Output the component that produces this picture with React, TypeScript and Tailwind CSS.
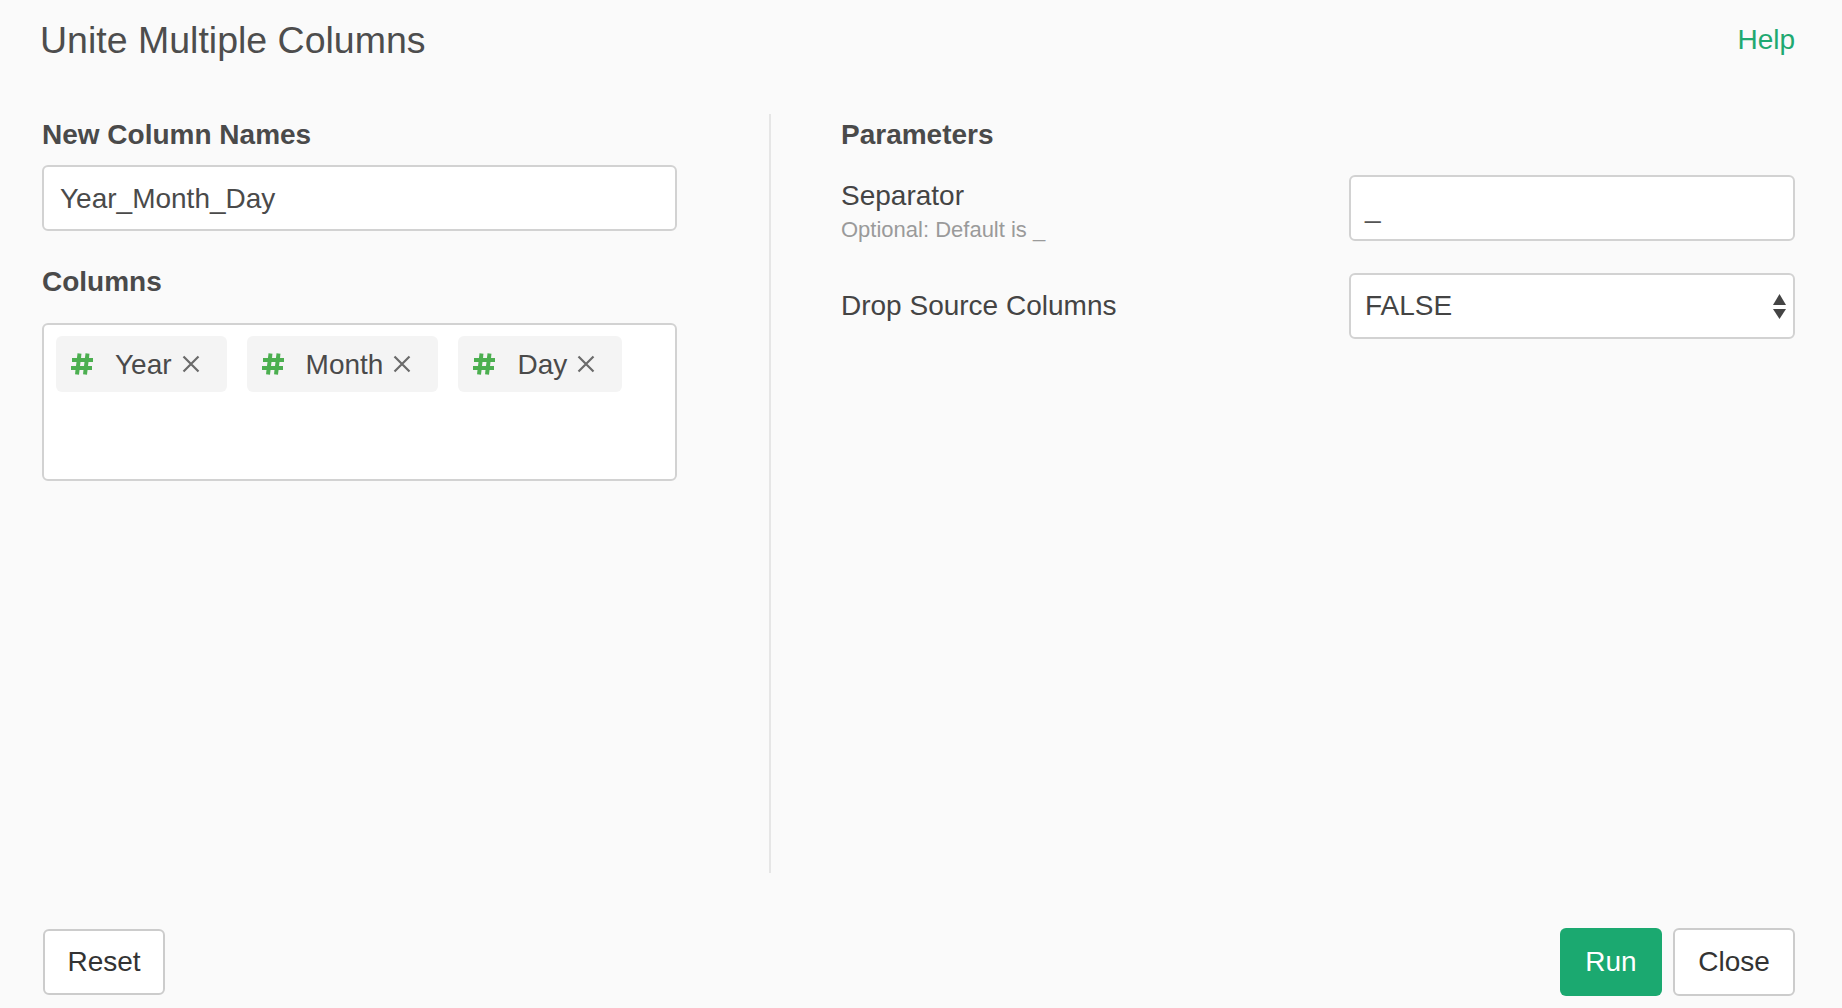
// ** Unite Multiple Columns dialog

const Hashtag = () => (
    <svg width="24" height="22" viewBox="0 0 24 22" className="shrink-0">
        <g stroke="#4caf50" strokeWidth="4" strokeLinecap="butt" fill="none">
            <path d="M9.5 0.5 7 21.5"/>
            <path d="M17.5 0.5 15 21.5"/>
            <path d="M2 7h21"/>
            <path d="M1 15h21"/>
        </g>
    </svg>
);

const Cross = () => (
    <svg width="18" height="18" viewBox="0 0 18 18" className="shrink-0">
        <path d="M1.5 1.5l15 15M16.5 1.5l-15 15" stroke="#6b6b6b" strokeWidth="2.2" fill="none"/>
    </svg>
);

const SelectArrows = () => (
    <svg width="13" height="25" viewBox="0 0 13 25" className="shrink-0">
        <path d="M6.5 0 13 11H0z" fill="#444"/>
        <path d="M0 15h13L6.5 25z" fill="#444"/>
    </svg>
);

const Chip = ({label}: { label: string }) => (
    <div className="h-[56px] rounded-[6px] bg-[#f4f4f4] flex items-center pl-[14px] pr-[27px]">
        <Hashtag/>
        <span className="ml-[21px] mt-[1px] text-[28px] leading-none text-[#4a4a4a]">{label}</span>
        <span className="ml-[10px] flex items-center"><Cross/></span>
    </div>
);

const App = () => {
    return (
        <div className="h-[1008px] w-full overflow-hidden bg-[#fafafa] text-[#444] flex flex-col pl-[42px] pr-[47px] font-['Liberation_Sans',Arial,sans-serif]">

            {/* header */}
            <div className="h-[114px] shrink-0 flex justify-between items-start pt-[22px]">
                <h1 className="ml-[-2px] text-[37.5px] leading-none text-[#4d4d4d]">Unite Multiple Columns</h1>
                <a className="mt-[4px] text-[28px] leading-none text-[#1fa971] cursor-pointer">Help</a>
            </div>

            {/* body */}
            <div className="h-[759px] shrink-0 flex">
                <div className="w-[635px] shrink-0 pt-[7px]">
                    <div className="text-[28px] font-bold leading-none text-[#4a4a4a]">New Column Names</div>
                    <div className="mt-[16px] h-[66px] rounded-[6px] border-2 border-[#d2d2d2] bg-white px-[16px] pt-[2px] flex items-center text-[28px] text-[#4a4a4a]">
                        Year_Month_Day
                    </div>

                    <div className="mt-[37px] text-[28px] font-bold leading-none text-[#4a4a4a]">Columns</div>
                    <div className="mt-[27px] h-[158px] rounded-[6px] border-2 border-[#d2d2d2] bg-white pt-[11px] pl-[12px] flex items-start gap-[20px]">
                        <Chip label="Year"/>
                        <Chip label="Month"/>
                        <Chip label="Day"/>
                    </div>
                </div>

                <div className="ml-[92px] w-[2px] shrink-0 bg-[#e6e6e6]"/>

                <div className="ml-[70px] flex-1 pt-[7px]">
                    <div className="text-[28px] font-bold leading-none text-[#4a4a4a]">Parameters</div>

                    <div className="mt-[26px] flex items-start">
                        <div className="flex-1 pt-[7px]">
                            <div className="text-[28px] leading-none">Separator</div>
                            <div className="mt-[9px] text-[22px] leading-none text-[#9a9a9a]">Optional: Default is _</div>
                        </div>
                        <div className="w-[446px] h-[66px] rounded-[6px] border-2 border-[#d2d2d2] bg-white px-[14px] flex items-center text-[28px] text-[#555]">
                            _
                        </div>
                    </div>

                    <div className="mt-[32px] flex items-center">
                        <div className="flex-1 text-[28px] leading-none">Drop Source Columns</div>
                        <div className="w-[446px] h-[66px] rounded-[6px] border-2 border-[#d2d2d2] bg-white pl-[14px] pr-[7px] flex items-center justify-between text-[28px] text-[#444]">
                            <span>FALSE</span>
                            <SelectArrows/>
                        </div>
                    </div>
                </div>
            </div>

            {/* footer */}
            <div className="mt-[55px] flex justify-between items-start">
                <button className="ml-[1px] mt-[1px] w-[122px] h-[66px] rounded-[6px] border-2 border-[#cccccc] bg-white text-[28px] text-[#333]">
                    Reset
                </button>
                <div className="flex items-start">
                    <button className="w-[102px] h-[68px] rounded-[6px] bg-[#1ba970] text-[28px] text-white">Run</button>
                    <button className="ml-[11px] w-[122px] h-[68px] rounded-[6px] border-2 border-[#cccccc] bg-white text-[28px] text-[#333]">
                        Close
                    </button>
                </div>
            </div>
        </div>
    );
};

export default App;
